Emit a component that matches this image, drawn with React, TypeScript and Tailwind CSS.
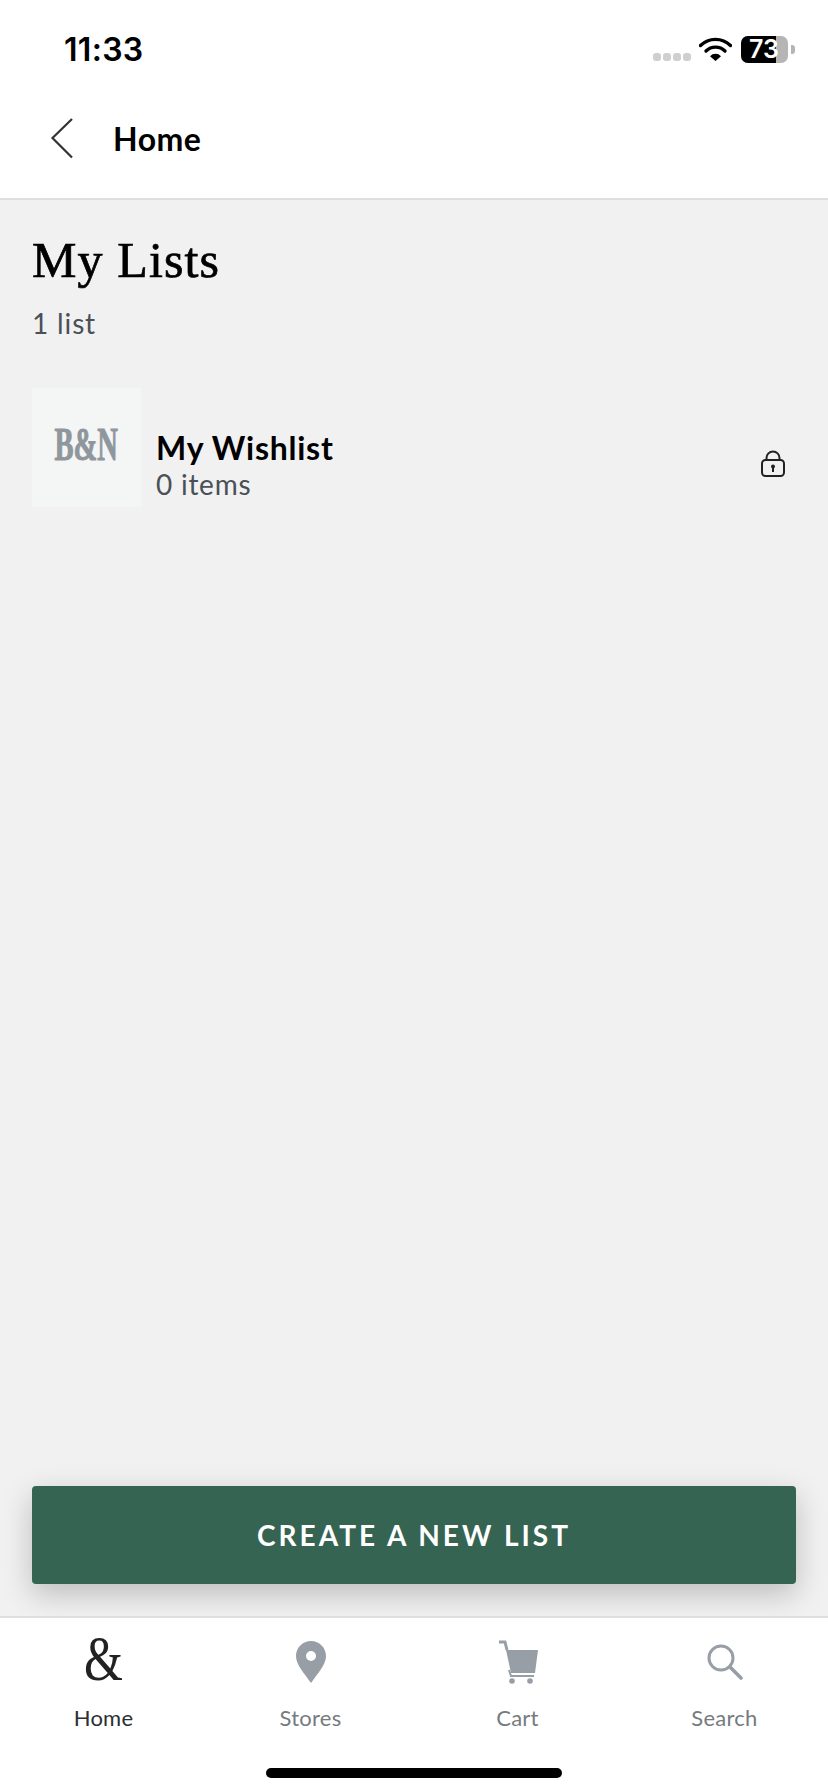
const lato = "font-['Lato',sans-serif]";

const StatusBar = () => (
  <div className="flex h-[96px] items-start justify-between pl-[64px] pr-[33px] pt-[32px]">
    <span className="font-['Inter',sans-serif] text-[32px] leading-[36px] font-semibold text-black tracking-[0.3px]">
      11:33
    </span>
    <div className="flex items-start pt-[4px]">
      <div className="mt-[17px] flex gap-[2px]">
        <span className="h-[8px] w-[8px] rounded-[3px] bg-[#cfcfcf]" />
        <span className="h-[8px] w-[8px] rounded-[3px] bg-[#cfcfcf]" />
        <span className="h-[8px] w-[8px] rounded-[3px] bg-[#cfcfcf]" />
        <span className="h-[8px] w-[8px] rounded-[3px] bg-[#cfcfcf]" />
      </div>
      <svg className="ml-[8px] mt-[1px]" width="33" height="24" viewBox="0 0 33 24">
        <path d="M1.500 8.500a21.500 21.500 0 0 1 30 0" fill="none" stroke="#000" strokeWidth="3.400" strokeLinecap="round" />
        <path d="M7 14a13.500 13.500 0 0 1 19 0" fill="none" stroke="#000" strokeWidth="3.400" strokeLinecap="round" />
        <path d="M11 19.200a7.500 7.500 0 0 1 11 0L16.500 24z" fill="#000" />
      </svg>
      <div className="relative ml-[9px] h-[27px] w-[47px] rounded-[7px] bg-[#b5b5b5]">
        <div className="h-full w-[35px] rounded-l-[7px] bg-black" />
        <span className="absolute left-[8px] top-0 font-['Inter',sans-serif] text-[25px] leading-[27px] font-semibold text-white">
          73
        </span>
      </div>
      <div className="ml-[3px] mt-[9px] h-[9px] w-[4px] rounded-r-[3px] bg-[#b5b5b5]" />
    </div>
  </div>
);

const NavHeader = () => (
  <div className="flex h-[102px] items-start pl-[50px] pt-[22px]">
    <svg className="mt-[-1px]" width="24" height="42" viewBox="0 0 24 42">
      <path d="M22 2 2.500 21 22 40.500" fill="none" stroke="#333" strokeWidth="2.200" />
    </svg>
    <span className={`${lato} ml-[39px] text-[32px] leading-[42px] font-bold tracking-[0.5px] text-black`}>Home</span>
  </div>
);

const ListRow = () => (
  <div className="mt-[47px] flex items-start pl-[32px] pr-[42px]">
    <div className="flex h-[119px] w-[109px] items-center justify-center bg-[#f4f5f5]">
      <span className="mt-[-6px] origin-center scale-x-[0.62] font-['Liberation_Serif',serif] text-[46px] leading-none font-bold whitespace-nowrap text-[#8f969c] [-webkit-text-stroke:1px_#8f969c]">
        B&amp;N
      </span>
    </div>
    <div className={`${lato} ml-[15px] mt-[42px] flex-1`}>
      <div className="text-[32px] leading-[36px] font-bold tracking-[0.75px] text-black">My Wishlist</div>
      <div className="text-[28px] leading-[36px] tracking-[0.75px] text-[#4a5056]">0 items</div>
    </div>
    <svg className="mt-[62px]" width="26" height="28" viewBox="0 0 26 28">
      <rect x="2" y="10" width="22" height="16" rx="3.500" fill="none" stroke="#222" strokeWidth="2" />
      <path d="M6.500 10V8a6.500 6.500 0 0 1 13 0v2" fill="none" stroke="#222" strokeWidth="2" />
      <circle cx="13" cy="16.500" r="2" fill="#222" />
      <rect x="12" y="17" width="2" height="5" fill="#222" />
    </svg>
  </div>
);

const PinIcon = () => (
  <svg width="30" height="42" viewBox="0 0 30 42">
    <path
      fillRule="evenodd"
      d="M15 0C6.700 0 0 6.700 0 15c0 9 9 18 15 27 6-9 15-18 15-27C30 6.700 23.300 0 15 0zm0 10a5 5 0 1 1 0 10 5 5 0 0 1 0-10z"
      fill="#979ea6"
    />
  </svg>
);

const CartIcon = () => (
  <svg width="40" height="44" viewBox="0 0 40 44">
    <path d="M1 2h6l2 8" fill="none" stroke="#979ea6" strokeWidth="3" />
    <path d="M8 10h32l-3 23H13z" fill="#979ea6" />
    <rect x="12" y="33.500" width="24" height="3" fill="#fff" />
    <path d="M11 30l2 6h23" fill="none" stroke="#979ea6" strokeWidth="2" />
    <circle cx="14" cy="41" r="2.800" fill="#979ea6" />
    <circle cx="32" cy="41" r="2.800" fill="#979ea6" />
  </svg>
);

const SearchIcon = () => (
  <svg width="36" height="36" viewBox="0 0 36 36">
    <circle cx="14" cy="14" r="12" fill="none" stroke="#979ea6" strokeWidth="3" />
    <path d="M23 23l11 11" fill="none" stroke="#979ea6" strokeWidth="3.600" strokeLinecap="round" />
  </svg>
);

const tabs = [
  {
    label: "Home",
    active: true,
    icon: (
      <span className="mt-[-6px] scale-y-[1.25] font-['Liberation_Serif',serif] text-[50px] leading-[44px] text-[#222]">
        &amp;
      </span>
    ),
  },
  { label: "Stores", active: false, icon: <PinIcon /> },
  { label: "Cart", active: false, icon: <CartIcon /> },
  { label: "Search", active: false, icon: <SearchIcon /> },
];

const TabBar = () => (
  <div className="h-[176px] border-t-2 border-[#dedede] bg-white">
    <div className="grid grid-cols-4 pt-[21px]">
      {tabs.map((tab) => (
        <div key={tab.label} className="flex flex-col items-center">
          <div className="flex h-[46px] items-center justify-center">{tab.icon}</div>
          <span
            className={`${lato} mt-[19px] text-[22px] leading-[28px] tracking-[0.25px] ${tab.active ? "text-[#2c2f31]" : "text-[#767b80]"}`}
          >
            {tab.label}
          </span>
        </div>
      ))}
    </div>
    <div className="mx-auto mt-[36px] h-[10px] w-[296px] rounded-full bg-black" />
  </div>
);

export default function App() {
  return (
    <div className="flex h-[1792px] w-[828px] flex-col overflow-hidden bg-[#f1f1f2]">
      <div className="border-b-2 border-[#dedede] bg-white">
        <StatusBar />
        <NavHeader />
      </div>
      <div className="flex flex-1 flex-col">
        <h1 className="mt-[32px] pl-[32px] font-['Liberation_Serif',serif] text-[50px] leading-[56px] tracking-[1.1px] text-black [-webkit-text-stroke:0.7px_black]">
          My Lists
        </h1>
        <p className={`${lato} mt-[17px] pl-[32px] text-[28px] leading-[36px] tracking-[0.85px] text-[#4a5056]`}>
          1 list
        </p>
        <ListRow />
        <div className="mt-auto px-[32px] pb-[32px]">
          <button
            className={`${lato} flex h-[98px] w-full items-center justify-center rounded-[4px] bg-[#366452] text-[28px] font-bold tracking-[3px] text-white shadow-[0_10px_30px_rgba(0,0,0,0.22)]`}
          >
            CREATE A NEW LIST
          </button>
        </div>
      </div>
      <TabBar />
    </div>
  );
}
